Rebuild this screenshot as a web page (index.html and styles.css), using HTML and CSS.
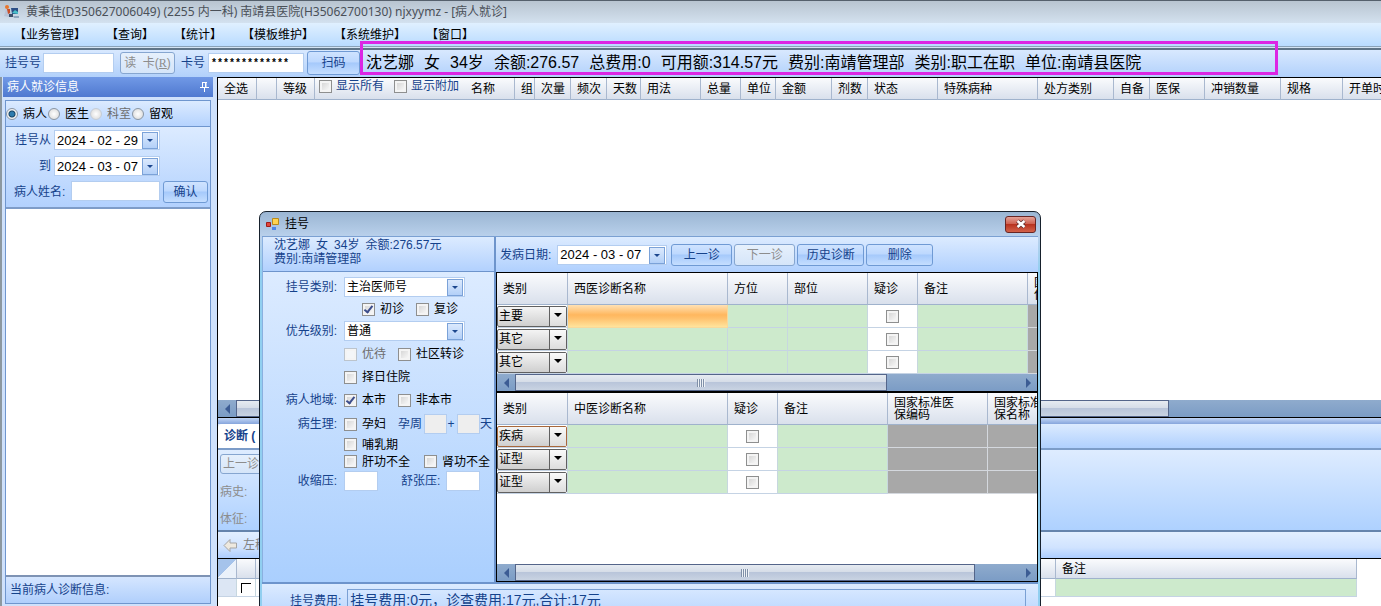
FILE: index.html
```html
<!DOCTYPE html>
<html lang="zh-CN">
<head>
<meta charset="utf-8">
<title>病人就诊</title>
<link rel="stylesheet" href="styles.css">
</head>
<body>
<div class="app">
  <header class="titlebar">
    <svg class="app-icon" width="17" height="16" viewBox="0 0 17 16" aria-hidden="true">
      <circle cx="4" cy="3" r="2" fill="#e8772e"/><path d="M1 12 3 5h3l2 4-2 4z" fill="#b8c4d8"/><path d="M4 5h3v4l-2 1z" fill="#c9502a"/>
      <path d="M8 4h7v6H9z" fill="#2c4f86"/><path d="m9 9 3-3 3 2v2z" fill="#48c0c8"/><path d="M10 12h6v2h-5z" fill="#8fa6bd"/><path d="M6 10h4v3H6z" fill="#3d4e68"/>
    </svg>
    <h1>黄秉佳(D350627006049) (2255 内一科) 南靖县医院(H35062700130) njxyymz - [病人就诊]</h1>
  </header>
  <nav class="menu">
    <a href="#">【业务管理】</a><a href="#">【查询】</a><a href="#">【统计】</a><a href="#">【模板维护】</a><a href="#">【系统维护】</a><a href="#">【窗口】</a>
  </nav>
  <div class="toolbar">
    <label for="regno">挂号号</label><input id="regno" class="field regno" type="text">
    <button class="btn read" disabled>读&nbsp; 卡(<u>R</u>)</button>
    <label for="cardno">卡号</label><input id="cardno" class="field cardno" type="text" value="*************">
    <button class="btn scan">扫码</button>
    <div class="patient"><span>沈艺娜</span><span>女</span><span>34岁</span><span>余额:276.57</span><span>总费用:0</span><span>可用额:314.57元</span><span>费别:南靖管理部</span><span>类别:职工在职</span><span>单位:南靖县医院</span></div>
  </div>
  <main class="workspace">
    <aside class="side">
      <h2 class="side-title">病人就诊信息
        <svg width="9" height="12" viewBox="0 0 9 12" fill="none" stroke="#fff" aria-hidden="true"><path d="M2.500 1v5M6 1v5M2 1.500h5M0 6.500h9M4.500 7v4M5.500 1v5"/></svg>
      </h2>
      <div class="side-box">
        <div class="radios">
          <label><input type="radio" name="kind" checked>病人</label>
          <label><input type="radio" name="kind">医生</label>
          <label class="off"><input type="radio" name="kind" disabled>科室</label>
          <label><input type="radio" name="kind">留观</label>
        </div>
        <div class="filters">
          <label for="from">挂号从</label><div class="combo date"><input id="from" type="text" value="2024 - 02 - 29"><button class="drop" aria-label="选择日期"></button></div>
          <label for="to">到</label><div class="combo date"><input id="to" type="text" value="2024 - 03 - 07"><button class="drop" aria-label="选择日期"></button></div>
          <label class="name-label" for="pname">病人姓名:</label><div class="name-row"><input id="pname" class="field" type="text"><button class="btn">确认</button></div>
        </div>
        <div class="list"></div>
        <div class="side-foot">当前病人诊断信息:</div>
      </div>
    </aside>
    <section class="content">
      <div class="orders">
        <table class="orders-table">
          <colgroup><col class="w39"><col class="w20"><col class="w38"><col class="w150"><col class="w50"><col class="w20"><col class="w36"><col class="w36"><col class="w34"><col class="w60"><col class="w40"><col class="w35"><col class="w56"><col class="w36"><col class="w70"><col class="w100"><col class="w76"><col class="w36"><col class="w55"><col class="w76"><col class="w62"><col class="w80"></colgroup>
          <thead><tr><th>全选</th><th></th><th>等级</th><th class="toggles"><label><input type="checkbox">显示所有</label><label><input type="checkbox">显示附加</label></th><th>名称</th><th>组</th><th>次量</th><th>频次</th><th>天数</th><th>用法</th><th>总量</th><th>单位</th><th>金额</th><th>剂数</th><th>状态</th><th>特殊病种</th><th>处方类别</th><th>自备</th><th>医保</th><th>冲销数量</th><th>规格</th><th>开单时</th></tr></thead>
        </table>
      </div>
      <div class="scroll"><button class="prev" aria-label="向左"></button><div class="thumb thumb-main"></div></div>
      <div class="splitter"></div>
      <div class="tabs"><button class="tab">诊断 (</button></div>
      <div class="diag">
        <button class="btn" disabled>上一诊</button>
        <p>病史:</p><p>体征:</p>
      </div>
      <div class="moves"><svg width="15" height="15" viewBox="0 0 15 15" aria-hidden="true"><path d="M1 7.500 7 1.500V5h6.500v5H7v3.500z" fill="#eee9df" stroke="#a5a5a5"/></svg>左移</div>
      <div class="bottom">
        <table class="bottom-table">
          <colgroup><col class="w19"><col class="w19"><col class="w800"><col class="w301"></colgroup>
          <thead><tr><th class="corner"></th><th></th><th></th><th>备注</th></tr></thead>
          <tbody><tr><td class="rowhead"></td><td><i class="tick"></i></td><td></td><td class="green"></td></tr></tbody>
        </table>
      </div>
    </section>
  </main>

  <section class="dialog" role="dialog" aria-labelledby="dlg-title">
    <header class="dlg-title">
      <svg width="14" height="13" viewBox="0 0 14 13" aria-hidden="true"><path d="M6.500.5h6v6h-6z" fill="#ffd34f" stroke="#b88a1c"/><path d="M.5 4.500h4v4h-4z" fill="#e2463c" stroke="#a01c18"/><path d="M6 9h4v3H6z" fill="#4c86e8"/></svg>
      <h2 id="dlg-title">挂号</h2>
      <button class="close" aria-label="关闭"><svg width="12" height="10" viewBox="0 0 12 10"><path d="m2.500 2 7 6M9.500 2l-7 6" stroke="#5a2a2a" stroke-width="4"/><path d="m2.500 2 7 6M9.500 2l-7 6" stroke="#fff" stroke-width="2.500"/></svg></button>
    </header>
    <div class="dlg-body">
      <div class="dlg-left">
        <div class="dlg-info">
          <p><span>沈艺娜</span><span>女</span><span>34岁</span><span>余额:276.57元</span></p>
          <p>费别:南靖管理部</p>
        </div>
        <form class="form">
          <div class="row"><label class="lead" for="regtype">挂号类别:</label><div class="combo wide"><select id="regtype"><option>主治医师号</option></select></div></div>
          <div class="row indent"><label class="pair"><input type="checkbox" checked>初诊</label><label><input type="checkbox">复诊</label></div>
          <div class="row"><label class="lead" for="prio">优先级别:</label><div class="combo wide"><select id="prio"><option>普通</option></select></div></div>
          <div class="row tall"><span class="lead"></span><label class="pair off"><input type="checkbox" disabled>优待</label><label><input type="checkbox">社区转诊</label></div>
          <div class="row"><span class="lead"></span><label><input type="checkbox">择日住院</label></div>
          <div class="row tall"><span class="lead">病人地域:</span><label class="pair"><input type="checkbox" checked>本市</label><label><input type="checkbox">非本市</label></div>
          <div class="row tall"><span class="lead">病生理:</span><label class="pair"><input type="checkbox">孕妇</label><label class="blue" for="weeks">孕周</label><input id="weeks" class="field tiny" type="text" disabled><span class="plus">+</span><input class="field tiny" type="text" aria-label="天" disabled><span class="blue">天</span></div>
          <div class="row short"><span class="lead"></span><label><input type="checkbox">哺乳期</label></div>
          <div class="row short"><span class="lead"></span><label class="liver"><input type="checkbox">肝功不全</label><label><input type="checkbox">肾功不全</label></div>
          <div class="row"><label class="lead" for="sbp">收缩压:</label><input id="sbp" class="field bp" type="text"><label class="blue dbp" for="dbp">舒张压:</label><input id="dbp" class="field bp" type="text"></div>
        </form>
      </div>
      <div class="dlg-right">
        <div class="dlg-tools">
          <label for="onset">发病日期:</label><div class="combo onset"><input id="onset" type="text" value="2024 - 03 - 07"><button class="drop" aria-label="选择日期"></button></div>
          <button class="btn">上一诊</button><button class="btn" disabled>下一诊</button><button class="btn b67">历史诊断</button><button class="btn b67">删除</button>
        </div>
        <div class="grid west">
          <table>
            <colgroup><col class="w71"><col class="w160"><col class="w60"><col class="w80"><col class="w50"><col class="w110"><col class="w100"></colgroup>
            <thead><tr><th>类别</th><th>西医诊断名称</th><th>方位</th><th>部位</th><th>疑诊</th><th>备注</th><th class="wrap">国家标准医保编码</th></tr></thead>
            <tbody>
              <tr><td><div class="cell-combo"><select aria-label="类别"><option>主要</option></select></div></td><td class="active"></td><td class="green"></td><td class="green"></td><td class="check"><input type="checkbox" aria-label="疑诊"></td><td class="green"></td><td class="gray"></td></tr>
              <tr><td><div class="cell-combo"><select aria-label="类别"><option>其它</option></select></div></td><td class="green"></td><td class="green"></td><td class="green"></td><td class="check"><input type="checkbox" aria-label="疑诊"></td><td class="green"></td><td class="gray"></td></tr>
              <tr><td><div class="cell-combo"><select aria-label="类别"><option>其它</option></select></div></td><td class="green"></td><td class="green"></td><td class="green"></td><td class="check"><input type="checkbox" aria-label="疑诊"></td><td class="green"></td><td class="gray"></td></tr>
            </tbody>
          </table>
          <div class="scroll"><button class="prev" aria-label="向左"></button><div class="thumb thumb-west"><i></i></div><button class="next" aria-label="向右"></button></div>
        </div>
        <div class="grid east">
          <table>
            <colgroup><col class="w71"><col class="w160"><col class="w50"><col class="w110"><col class="w100"><col class="w100"></colgroup>
            <thead><tr><th>类别</th><th>中医诊断名称</th><th>疑诊</th><th>备注</th><th class="wrap">国家标准医保编码</th><th class="wrap">国家标准医保名称</th></tr></thead>
            <tbody>
              <tr><td><div class="cell-combo hot"><select aria-label="类别"><option>疾病</option></select></div></td><td class="green"></td><td class="check"><input type="checkbox" aria-label="疑诊"></td><td class="green"></td><td class="gray"></td><td class="gray"></td></tr>
              <tr><td><div class="cell-combo"><select aria-label="类别"><option>证型</option></select></div></td><td class="green"></td><td class="check"><input type="checkbox" aria-label="疑诊"></td><td class="green"></td><td class="gray"></td><td class="gray"></td></tr>
              <tr><td><div class="cell-combo"><select aria-label="类别"><option>证型</option></select></div></td><td class="green"></td><td class="check"><input type="checkbox" aria-label="疑诊"></td><td class="green"></td><td class="gray"></td><td class="gray"></td></tr>
            </tbody>
          </table>
          <div class="scroll"><button class="prev" aria-label="向左"></button><div class="thumb thumb-east"><i></i></div><button class="next" aria-label="向右"></button></div>
        </div>
      </div>
    </div>
    <footer class="dlg-foot"><span>挂号费用:</span><output>挂号费用:0元，诊查费用:17元,合计:17元</output></footer>
  </section>
</div>
</body>
</html>
```
FILE: styles.css
```css
*, *::before, *::after { box-sizing: border-box; }
body, h1, h2, p { margin: 0; }
body, input, button, select {
  font: 12px/16px "Liberation Sans", "Noto Sans CJK SC", sans-serif;
}
body { color: #000; background: #fff; }
label, .blue { color: #15428b; }
button, select, input { padding: 0; margin: 0; border: 0; color: inherit; }

.app {
  position: relative;
  display: flex;
  flex-direction: column;
  height: 100vh;
  overflow: hidden;
}

/* window title and menu */
.titlebar {
  display: flex;
  align-items: center;
  gap: 6px;
  flex: none;
  height: 23px;
  padding-left: 3px;
  border-top: 1px solid #55606c;
  background: linear-gradient(#b8c4d0, #d3e1ef);
}
.titlebar h1 { font: 12px/20px "Noto Sans", "Noto Sans CJK SC", sans-serif; color: #4a5058; white-space: nowrap; }
.menu {
  display: flex;
  gap: 20px;
  flex: none;
  height: 23px;
  padding-left: 14px;
  background: linear-gradient(#e0f0ff, #b9dbff);
}
.menu a { color: #000; text-decoration: none; line-height: 24px; white-space: nowrap; }

/* top tool row */
.toolbar {
  display: flex;
  align-items: center;
  flex: none;
  height: 31px;
  padding-left: 5px;
  border-top: 1px solid #8aa2b8;
  box-shadow: inset 0 1px #d4e4f4, inset 0 3px #5f7488;
  padding-top: 2px;
  background: linear-gradient(#dcebff, #b2d1fb);
}
.field { height: 20px; background: #fff; border: 1px solid #b3cdf0; }
.field:disabled { background: #eee; }
.regno { width: 71px; margin: 0 6px 0 2px; }
.cardno { width: 96px; margin: 0 3px; font-family: "Liberation Mono", monospace; font-size: 10px; padding-left: 2px; font-weight: bold; }
.btn {
  height: 22px;
  border: 1px solid #6f9ad4;
  border-radius: 3px;
  color: #15428b;
  background: linear-gradient(#cfe3ff, #bdd8fe 45%, #a5c9fb 50%, #c5deff);
  white-space: nowrap;
}
.btn:disabled { color: #8d8d8d; background: linear-gradient(#e6f0fc, #d5e5f9); border-color: #86a6d0; }
.read { width: 55px; margin-right: 6px; }
.read u { font-family: "Liberation Serif", serif; }
.scan { width: 53px; height: 24px; }
.patient {
  display: flex;
  gap: 10px;
  align-items: center;
  align-self: stretch;
  position: relative;
  padding-left: 6px;
  font-size: 16px;
  line-height: 24px;
  white-space: nowrap;
}
.patient::after {
  content: "";
  position: absolute;
  inset: -8px auto 2px 0;
  width: 918px;
  border: 3px solid #dc26e4;
  z-index: 2;
}

/* left side */
.workspace { display: flex; flex: 1; min-height: 0; background: #c3dafa; }
.side { display: flex; flex-direction: column; flex: none; width: 217px; padding: 0 4px 0 3px; background: #cfe1fb; border-left: 2px solid #8c98a0; }
.side-title {
  display: flex;
  align-items: center;
  justify-content: space-between;
  height: 20px;
  padding: 0 4px;
  margin-left: -2px;
  font-weight: normal;
  font-size: 12px;
  color: #fff;
  background: linear-gradient(#7199e6, #4f79d0);
}
.side-box { display: flex; flex-direction: column; flex: 1; margin: 3px 2px 2px 0; border: 1px solid #6f96ce; }
.radios { display: flex; align-items: center; height: 26px; border-bottom: 1px solid #6f96ce; background: linear-gradient(#dcebff, #b5d3fe); }
.radios label { display: flex; align-items: center; gap: 5px; width: 42px; color: #000; white-space: nowrap; }
.radios .off, .form .off { color: #6d6d6d; }
input[type="radio"] {
  appearance: none;
  flex: none;
  width: 12px;
  height: 12px;
  border: 1px solid #8a96a4;
  border-radius: 50%;
  background: radial-gradient(#fff, #d5d5d5);
}
input[type="radio"]:checked { background: radial-gradient(#2e7cae 0 2px, #174364 3px, #f2f2f2 4px); }
input[type="radio"]:disabled { border-color: #c4cdd8; }
.filters {
  display: grid;
  grid-template-columns: 45px 1fr;
  grid-template-rows: 26px 26px 26px;
  align-items: center;
  column-gap: 3px;
  height: 82px;
  background: linear-gradient(#dcebff, #b2d1fe);
  border-bottom: 2px solid #7e9cc8;
}
.filters label { text-align: right; white-space: nowrap; }
.filters .name-label { grid-column: 1 / 3; grid-row: 3; text-align: left; padding-left: 8px; }
.name-row { grid-column: 1 / 3; grid-row: 3; display: flex; gap: 3px; margin-left: 65px; }
.name-row .field { width: 89px; }
.name-row .btn { width: 45px; }
.list { flex: 1; background: #fff; }
.side-foot { height: 28px; line-height: 26px; padding-left: 4px; color: #15428b; border-top: 2px solid #7e93b4; background: linear-gradient(#d5e6ff, #b0cffc); }

.combo { position: relative; height: 20px; background: #fff; border: 1px solid #b3cdf0; }
.combo input, .combo select { width: 100%; height: 18px; padding-left: 2px; background: transparent; appearance: none; }
.combo input { font-size: 13px; }
.combo.date { width: 106px; }
.drop, .combo.wide::after {
  content: "";
  position: absolute;
  top: 1px;
  right: 1px;
  width: 16px;
  height: 17px;
  border: 1px solid #7ba2d8;
  background: linear-gradient(#dbe9fd, #b3d0f8);
  pointer-events: none;
}
.drop::after, .combo.wide::before {
  content: "";
  position: absolute;
  z-index: 1;
  top: 6px;
  right: 4px;
  border: 3px solid transparent;
  border-top-color: #1c478e;
  border-bottom: 0;
  pointer-events: none;
}
.combo.wide::before { top: 8px; right: 6px; }

/* tables */
table { border-collapse: separate; border-spacing: 0; table-layout: fixed; width: 0; }
th {
  padding: 1px 0 0 6px;
  font-weight: normal;
  text-align: left;
  white-space: nowrap;
  overflow: hidden;
  border-right: 1px solid #a9b8cf;
  border-bottom: 1px solid #9fb2cc;
  background: linear-gradient(#fafbfd, #d9e0ec);
}
td { padding: 0; border-right: 1px solid #c7d7df; border-bottom: 1px solid #c5d3e4; }
.green { background: #cdeacc; }
.gray { background: #a8a8a8; border-color: #d4d8de; }
.active { background: linear-gradient(#ffe1b4, #ffb75e 45%, #ffc06c 60%, #ffe49c); border-color: #f8d99b; }
.w19 { width: 19px; } .w20 { width: 20px; } .w34 { width: 34px; } .w35 { width: 35px; } .w36 { width: 36px; }
.w38 { width: 38px; } .w39 { width: 39px; } .w40 { width: 40px; } .w50 { width: 50px; } .w55 { width: 55px; }
.w56 { width: 56px; } .w60 { width: 60px; } .w62 { width: 62px; } .w70 { width: 70px; } .w71 { width: 71px; }
.w76 { width: 76px; } .w80 { width: 80px; } .w100 { width: 100px; } .w110 { width: 110px; } .w150 { width: 150px; }
.w160 { width: 160px; } .w301 { width: 301px; } .w800 { width: 800px; }

input[type="checkbox"] {
  appearance: none;
  flex: none;
  width: 13px;
  height: 13px;
  border: 1px solid #8e8f8f;
  background: linear-gradient(135deg, #cfcfcf, #fff);
  box-shadow: inset 0 0 0 2px #f4f4f4;
}
input[type="checkbox"]:disabled { border-color: #bcc4cc; background: #f4f6f8; }
input[type="checkbox"]:checked { position: relative; }
input[type="checkbox"]:checked::after {
  content: "";
  position: absolute;
  left: 3px;
  top: 0;
  width: 5px;
  height: 9px;
  border: solid #3c4d8c;
  border-width: 0 2px 2px 0;
  transform: rotate(38deg);
}

.content { display: flex; flex-direction: column; flex: 1; min-width: 0; border-top: 1px solid #000; border-left: 1px solid #000; }
.orders { flex: none; height: 322px; background: #fff; overflow: hidden; }
.orders th { height: 20px; }
.orders .toggles { padding: 0 0 2px 4px; border-right: 0; }
.toggles label { display: inline-flex; align-items: center; gap: 4px; width: 75px; }
.scroll { display: flex; flex: none; height: 17px; background: linear-gradient(#8fabcd, #7b9cc5); }
.scroll button { position: relative; width: 18px; background: transparent; }
.scroll button::after { content: ""; display: block; width: 0; margin: auto; border: 5px solid transparent; }
.scroll .prev::after { border-right-color: #3c5c94; border-left: 0; }
.scroll .next::after { border-left-color: #3c5c94; border-right: 0; }
.next { margin-left: auto; }
.thumb { display: flex; align-items: center; justify-content: center; border: 1px solid #54658a; background: linear-gradient(#e6ebf1, #d6dde8 45%, #b9c5da 50%, #c9d3e2); }
.thumb i { width: 8px; height: 8px; background: repeating-linear-gradient(90deg, #8090a8 0 1px, #eef2f6 1px 2px); }
.thumb-main { width: 933px; }
.thumb-west { width: 372px; }
.thumb-east { width: 460px; }
.splitter { flex: none; height: 7px; border-top: 1px solid #000; background: linear-gradient(#c1d5f5, #86a5dc); }
.tabs { flex: none; height: 25px; background: linear-gradient(#dcebff, #b0d0fe); border-bottom: 1px solid #7c9cc8; }
.tab { width: 64px; height: 24px; text-align: left; padding-left: 6px; font-weight: bold; color: #15428b; background: #fff; border-radius: 4px 4px 0 0; }
.diag { flex: none; height: 83px; padding: 4px 2px; color: #8c8c8c; border-top: 1px solid #7c9cc8; border-bottom: 2px solid #6584ac; background: linear-gradient(#deecff, #aed1ff); }
.diag .btn { width: 62px; height: 20px; padding-left: 2px; text-align: left; }
.diag p { padding-top: 9px; line-height: 18px; }
.moves { display: flex; flex: none; align-items: center; gap: 5px; height: 26px; padding-left: 5px; color: #808080; background: linear-gradient(#e2efff, #d0e3ff 60%, #accdff); }
.bottom { flex: 1; background: #fff; border-top: 1px solid #000; overflow: hidden; }
.bottom th { height: 20px; }
.bottom td { height: 18px; }
.bottom .corner { background: linear-gradient(135deg, #a5c3eb 50%, #eaf1fa 50%); }
.rowhead { background: #dce6f4; }
.tick { display: block; width: 10px; height: 10px; margin: 0 4px; border: solid #000; border-width: 1px 0 0 1px; }

/* registration window */
.dialog {
  position: absolute;
  top: 211px;
  left: 259px;
  width: 782px;
  padding: 0 2px;
  border: 1px solid #16202c;
  border-radius: 7px 7px 0 0;
  background: linear-gradient(#9bb6d3, #bad1ec 25px, #91cff0 60px);
}
.dlg-title { display: flex; align-items: center; gap: 5px; height: 24px; padding: 0 2px 0 4px; }
.dlg-title h2 { flex: 1; font-size: 12px; font-weight: normal; }
.close { display: flex; align-items: center; justify-content: center; width: 31px; height: 17px; border: 1px solid #682624; border-radius: 3px; background: linear-gradient(#e4a298, #cf6150 45%, #b8331f 50%, #d4624a); }
.dlg-body { display: flex; border-top: 1px solid #7ba0d2; }
.dlg-left { flex: none; width: 234px; display: flex; flex-direction: column; border-right: 2px solid #6d94cc; border-left: 1px solid #8ab0e0; }
.dlg-info { height: 35px; padding: 1px 11px; color: #15428b; border-bottom: 1px solid #6d94cc; background: linear-gradient(#dcebff, #b2d1fe); }
.dlg-info p { display: flex; gap: 6px; line-height: 14px; }
.form { flex: 1; padding-top: 4px; background: linear-gradient(#dcebff, #aacffe); }
.row { display: flex; align-items: center; height: 22px; white-space: nowrap; }
.row.tall { height: 24px; }
.row.short { height: 17px; }
.row label:not(.lead):not(.blue) { display: flex; align-items: center; gap: 5px; color: #000; }
.row .off:not(.blue):not(.lead) { color: #6d6d6d; }
.lead { flex: none; width: 74px; margin-right: 7px; text-align: right; color: #15428b; }
.indent { padding-left: 99px; }
.pair { flex: none; width: 54px; }
.liver { flex: none; width: 80px; }
.combo.wide { width: 121px; }
.tiny { width: 23px; margin-left: 2px; }
.plus { width: 8px; text-align: center; color: #15428b; }
.bp { width: 34px; }
.dbp { margin: 0 6px 0 23px; }

.dlg-right { flex: 1; min-width: 0; }
.dlg-tools { display: flex; align-items: center; gap: 2px; height: 35px; padding-left: 4px; background: linear-gradient(#dcebff, #b0d0fe); }
.dlg-tools label { margin-right: 4px; }
.onset { width: 110px; margin-right: 2px; }
.dlg-tools .btn { width: 61px; }
.dlg-tools .b67 { width: 67px; }
.grid { display: flex; flex-direction: column; overflow: hidden; border: 1px solid #000; background: #fff; }
.grid table { flex: none; }
.east { height: 190px; }
.east .scroll { margin-top: auto; }
.grid th { height: 32px; }
.grid td { height: 23px; }
.grid th.wrap { white-space: normal; line-height: 12px; padding-right: 30px; }
.check { text-align: center; }
.check input { display: block; margin: 0 auto; }
.cell-combo { position: relative; height: 21px; border: 1px solid #606060; border-radius: 2px; background: linear-gradient(#f4f4f4, #cfcfcf); }
.cell-combo.hot { border-color: #a8683c; }
.cell-combo select { appearance: none; width: 100%; height: 19px; padding-left: 1px; background: transparent; }
.cell-combo::before { content: ""; position: absolute; top: 0; right: 0; width: 17px; height: 19px; border-left: 1px solid #606060; background: linear-gradient(#fafafa, #ddd); pointer-events: none; }
.cell-combo::after { content: ""; position: absolute; top: 6px; right: 4px; border: 4px solid transparent; border-top-color: #000; border-bottom: 0; pointer-events: none; }
.dlg-foot { display: flex; gap: 6px; height: 40px; padding: 5px 12px 0 28px; border-top: 2px solid #6d94cc; color: #15428b; background: linear-gradient(#dcebff, #b2d1fe); }
.dlg-foot span { padding-top: 4px; }
.dlg-foot output { flex: 1; height: 24px; padding-left: 2px; font-size: 14px; line-height: 20px; border: 1px solid #7aa0d4; }
```
